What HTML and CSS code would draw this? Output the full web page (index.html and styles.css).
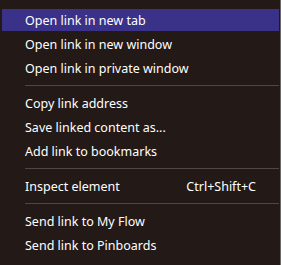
FILE: index.html
```html
<!DOCTYPE html>
<html lang="en">
<head>
    <meta charset="UTF-8">
    <title>Link context menu</title>
    <link rel="stylesheet" href="styles.css">
</head>
<body>
<div class="context-menu">
    <ul class="menu-group">
        <li class="menu-item on-item">Open link in new tab</li>
        <li class="menu-item">Open link in new window</li>
        <li class="menu-item">Open link in private window</li>
    </ul>
    <div class="menu-sep"></div>
    <ul class="menu-group">
        <li class="menu-item">Copy link address</li>
        <li class="menu-item">Save linked content as...</li>
        <li class="menu-item">Add link to bookmarks</li>
    </ul>
    <div class="menu-sep"></div>
    <ul class="menu-group">
        <li class="menu-item">
            <span>Inspect element</span>
            <span class="shortcut">Ctrl+Shift+C</span>
        </li>
    </ul>
    <div class="menu-sep"></div>
    <ul class="menu-group">
        <li class="menu-item">Send link to My Flow</li>
        <li class="menu-item">Send link to Pinboards</li>
    </ul>
</div>
</body>
</html>
```

FILE: styles.css
```css
html, body {
    margin: 0;
    height: 100%;
    background-color: #231917;
}

.context-menu {
    height: 265px;
    box-sizing: border-box;
    display: flex;
    flex-direction: column;
    padding: 9px 1px 0 2px;
    border-right: 1px solid #6b6866;
    background-color: #231917;
    font-family: "Noto Sans", "Open Sans", sans-serif;
    font-size: 12.5px;
    color: #ffffff;
}

.menu-group {
    list-style: none;
    margin: 0;
    padding-left: 0;
    display: flex;
    flex-direction: column;
    gap: 2px;
}

.menu-item {
    height: 22px;
    box-sizing: border-box;
    padding: 1px 23px 0 23px;
    display: flex;
    align-items: center;
    justify-content: space-between;
    white-space: nowrap;
}

.on-item {
    background-color: #3a3189;
}

.menu-sep {
    height: 1px;
    flex-shrink: 0;
    margin: 6px 0 6px 23px;
    background-color: #4d4745;
}
```
